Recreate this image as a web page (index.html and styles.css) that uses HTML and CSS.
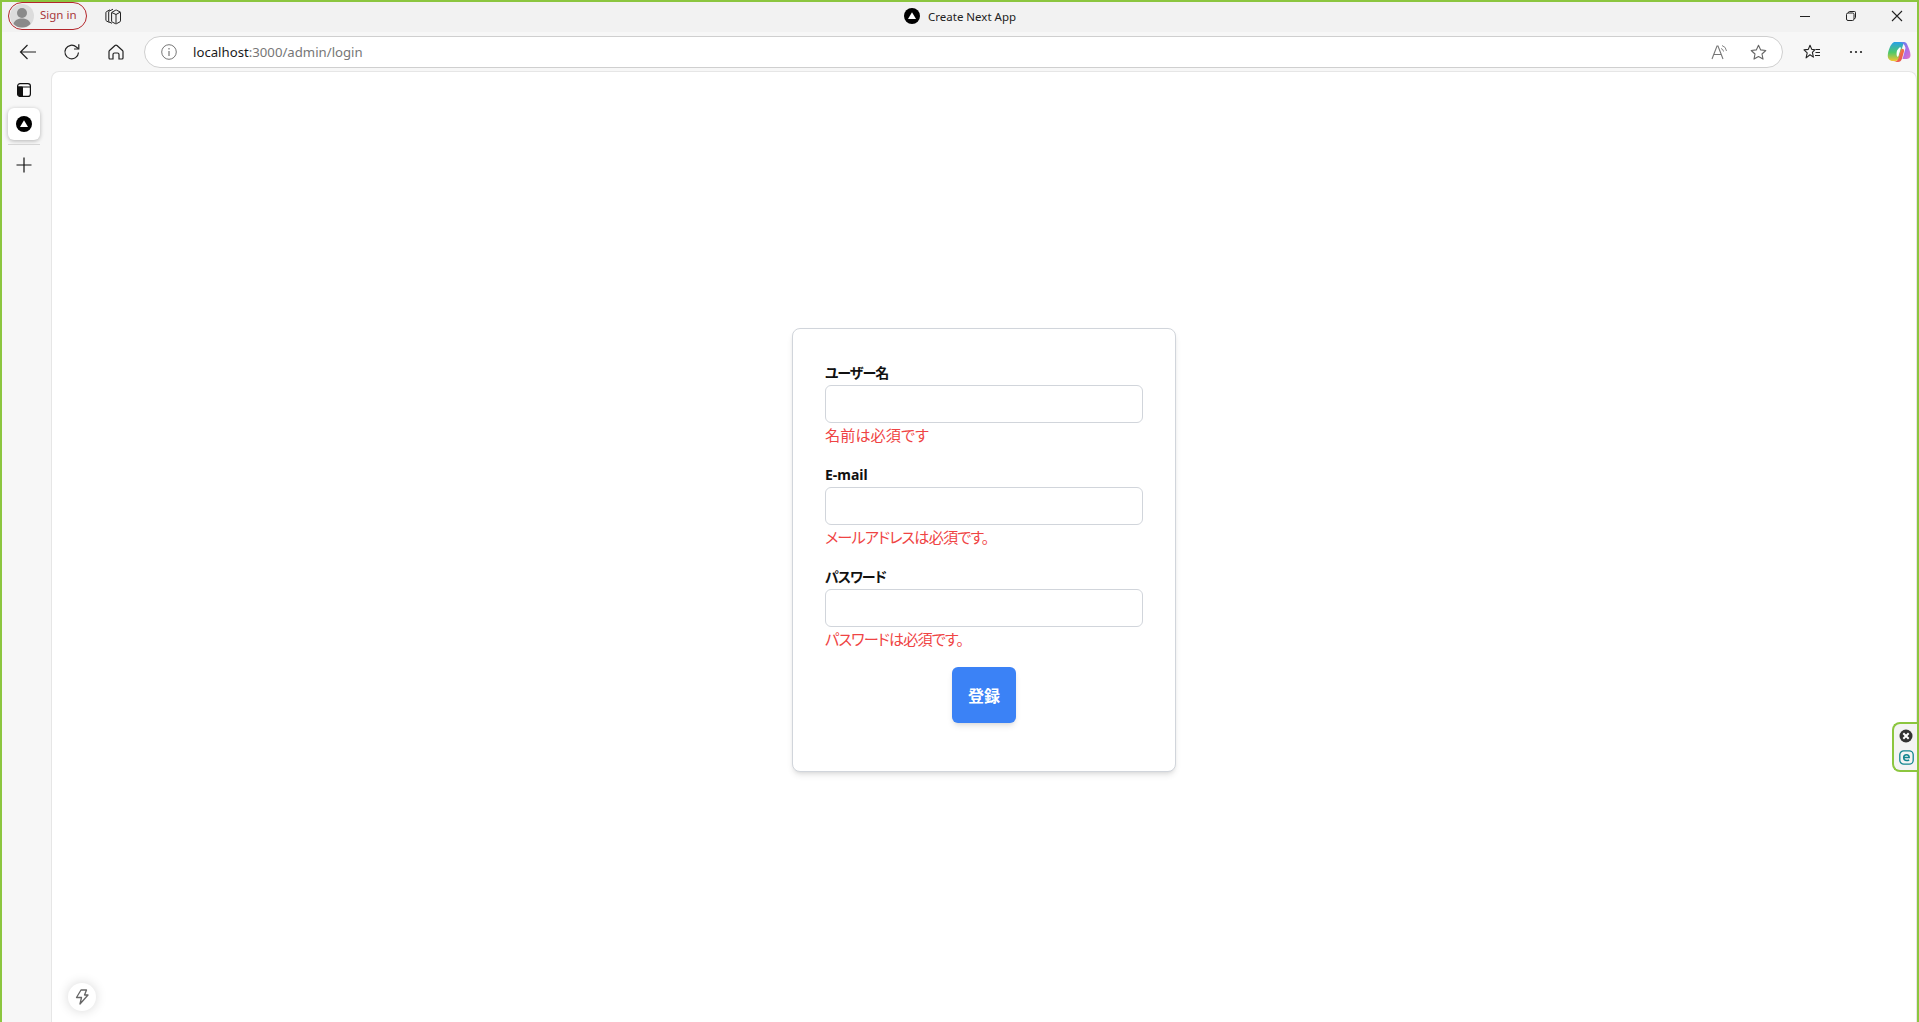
FILE: index.html
```html
<!DOCTYPE html>
<html lang="ja">
<head>
<meta charset="utf-8">
<title>Create Next App</title>
<link rel="stylesheet" href="styles.css">
</head>
<body>
<div class="window">
  <header class="titlebar">
    <div class="title-left">
      <div class="profile">
        <svg class="avatar" width="24" height="24" viewBox="0 0 24 24"><circle cx="12" cy="12" r="12" fill="#dcdcdc"/><circle cx="12" cy="9" r="5" fill="#8a8a8a"/><path d="M3.5 20c1-4 4.500-5.500 8.500-5.500s7.500 1.500 8.500 5.500a12 12 0 0 1-17 0z" fill="#8a8a8a"/></svg>
        <span class="profile-name">Sign in</span>
      </div>
      <svg class="collections" width="18" height="18" viewBox="0 0 18 18" fill="none" stroke="#222" stroke-width="1"><path d="M5.500 15.500 2.500 14a1 1 0 0 1-.6-.9V5.500a1 1 0 0 1 .6-.9L6 2.800"/><path d="M8 16.300 5.300 15a1 1 0 0 1-.6-.9V5a1 1 0 0 1 .6-.9L9 2.200"/><path d="M7.600 6a1 1 0 0 1 .6-.9L11.700 3.200a1 1 0 0 1 .9 0l3.400 1.700a1 1 0 0 1 .5.900v8.100a1 1 0 0 1-.5.900l-3.500 1.900a1 1 0 0 1-1 0l-3.300-1.700a1 1 0 0 1-.6-.9z"/><path d="M7.700 5.500 12 7.500l4.500-2.500M12 7.500V16.500"/></svg>
    </div>
    <div class="title-center">
      <svg width="16" height="16" viewBox="0 0 16 16"><circle cx="8" cy="8" r="8" fill="#000"/><path d="M8 4.300 12 11H4z" fill="#fff"/></svg>
      <span class="title-text">Create Next App</span>
    </div>
    <div class="window-controls">
      <svg width="12" height="12" viewBox="0 0 12 12" stroke="#222" fill="none"><path d="M1 6.500h10"/></svg>
      <svg width="12" height="12" viewBox="0 0 12 12" stroke="#222" fill="none"><rect x="1.500" y="3" width="7.500" height="7.500" rx="1.500"/><path d="M3.500 3V2.500a1 1 0 0 1 1-1h5a1 1 0 0 1 1 1V7.500a1 1 0 0 1-1 1H9"/></svg>
      <svg width="12" height="12" viewBox="0 0 12 12" stroke="#222" fill="none" stroke-width="1.100"><path d="m1 1 10 10M11 1 1 11"/></svg>
    </div>
  </header>

  <nav class="toolbar">
    <div class="nav-buttons">
      <svg width="18" height="18" viewBox="0 0 18 18" fill="none" stroke="#222" stroke-width="1.200"><path d="M1.500 9h15.500M8.500 2 1.500 9l7 7"/></svg>
      <svg width="18" height="18" viewBox="0 0 18 18" fill="none" stroke="#222" stroke-width="1.200"><path d="M15.500 9.500a6.800 6.800 0 1 1-2.200-5.500l2.200 1.800"/><path d="M15.800 1.300V6H11"/></svg>
      <svg width="18" height="18" viewBox="0 0 18 18" fill="none" stroke="#222" stroke-width="1.200"><path d="M2.500 7.500 8 2.500a1.500 1.500 0 0 1 2 0l5.500 5a1.500 1.500 0 0 1 .5 1V15a1 1 0 0 1-1 1h-3V11.500a1.500 1.500 0 0 0-1.500-1.500h-3A1.500 1.500 0 0 0 6 11.500V16H3a1 1 0 0 1-1-1V8.500a1.500 1.500 0 0 1 .5-1z"/></svg>
    </div>
    <div class="address">
      <svg class="info" width="16" height="16" viewBox="0 0 16 16" fill="none" stroke="#777"><circle cx="8" cy="8" r="7.300"/><path d="M8 7v5M8 4v1.400" stroke-width="1.200"/></svg>
      <span class="url"><span class="host">localhost</span>:3000/admin/login</span>
      <div class="address-end">
        <svg width="18" height="16" viewBox="0 0 18 16" fill="none" stroke="#777" stroke-width="1.100"><path d="M1 15 6 2h1l5 13M2.800 10.500h7.400"/><path d="M10 4.500a3.500 3.500 0 0 1 2.500 3M11 1.500a6.500 6.500 0 0 1 4.500 5.500" stroke-width=".9"/></svg>
        <svg width="17" height="17" viewBox="0 0 17 17" fill="none" stroke="#666" stroke-width="1.100"><path d="m8.500 1.200 2.200 4.700 5.100.6-3.800 3.500 1 5.100-4.500-2.500L4 15.100l1-5.100L1.200 6.500l5.100-.6z" stroke-linejoin="round"/></svg>
      </div>
    </div>
    <div class="tool-buttons">
      <svg class="favorites" width="18" height="17" viewBox="0 0 18 17" fill="none" stroke="#222" stroke-width="1.100"><path d="m7 1.200 1.800 4.200 3.200.3-2.600 2.600 1 4.800-3.400-2.300-3.900 3.100 1.100-5L1 5.900l4.300-.5z" stroke-linejoin="round"/><path d="M12.500 5.500H17M12.500 8.500H17M12 11.500h5"/></svg>
      <svg width="14" height="4" viewBox="0 0 14 4" fill="#222"><circle cx="2" cy="2" r="1.100"/><circle cx="7" cy="2" r="1.100"/><circle cx="12" cy="2" r="1.100"/></svg>
      <svg width="24" height="22" viewBox="0 0 24 22">
        <defs>
          <linearGradient id="cpA" x1="0" y1="0" x2="0" y2="1"><stop offset="0" stop-color="#27a0e8"/><stop offset=".55" stop-color="#4fc96a"/><stop offset="1" stop-color="#f2c531"/></linearGradient>
          <linearGradient id="cpB" x1="0" y1="0" x2="1" y2="1"><stop offset="0" stop-color="#3f8df0"/><stop offset=".6" stop-color="#b06ce6"/><stop offset="1" stop-color="#e772c0"/></linearGradient>
          <linearGradient id="cpC" x1="0" y1="0" x2="1" y2="1"><stop offset="0" stop-color="#f7a13a"/><stop offset="1" stop-color="#e83f55"/></linearGradient>
        </defs>
        <path d="M8 1h6c1.200 0 2 .6 2.400 1.800L12 17c-.4 1.500-1.500 2.500-3 3H6C2.500 20 .5 17.500 .8 14 1.100 10 3 5 5 2.800 5.800 1.600 6.800 1 8 1z" fill="url(#cpA)"/>
        <path d="M11.500 1H17c1.500 0 2.700 1 3.200 2.500C21.800 7 23.500 11 23.500 14c0 3-2 4-4.500 4h-3.500c1-3 2.500-9 3-11-.5-3-3-6-7-6z" fill="url(#cpB)"/>
        <path d="M10 9.500 12 7c.8-1 2-.8 1.800.5L11.500 15c-.2.800-.8 1-1.300.6-.8-.8-.8-4 -.2-6.100z" fill="#fff"/>
        <path d="M14 8c2.500-.5 3.500.5 3 2.500L15 17.500C14.500 20 12.500 21 11 21H6c3 0 4.800-1.500 5.500-4z" fill="url(#cpC)"/>
      </svg>
    </div>
  </nav>

  <div class="workspace">
    <aside class="sidebar">
      <svg class="side-toggle" width="14" height="14" viewBox="0 0 14 14"><rect x=".6" y=".6" width="12.800" height="12.800" rx="2.500" fill="#fff" stroke="#111" stroke-width="1.200"/><path d="M1 4h12M5.500 4v9.200H3a2 2 0 0 1-2-2V4z" fill="#111" stroke="#111"/></svg>
      <div class="side-tab">
        <svg width="16" height="16" viewBox="0 0 16 16"><circle cx="8" cy="8" r="8" fill="#000"/><path d="M8 4.300 12 11H4z" fill="#fff"/></svg>
      </div>
      <div class="side-rule"></div>
      <svg class="side-add" width="16" height="16" viewBox="0 0 16 16" stroke="#111" stroke-width="1.200"><path d="M8 .5v15M.5 8h15"/></svg>
    </aside>

    <main class="content">
      <form class="card">
        <div class="field">
          <label class="label label-kana">ユーザー名</label>
          <input class="input" type="text">
          <p class="error">名前は必須です</p>
        </div>
        <div class="field">
          <label class="label">E-mail</label>
          <input class="input" type="email">
          <p class="error error-kana">メールアドレスは必須です。</p>
        </div>
        <div class="field">
          <label class="label label-kana">パスワード</label>
          <input class="input" type="password">
          <p class="error error-kana">パスワードは必須です。</p>
        </div>
        <div class="actions">
          <button class="submit" type="button">登録</button>
        </div>
      </form>
      <div class="dev-badge">
        <svg width="14" height="16" viewBox="0 0 14 16" fill="none" stroke="#666" stroke-width="1.300" stroke-linejoin="round"><path d="M6 1h5.500L9.500 6H13L5 15l1.500-6.500H1.500z"/></svg>
      </div>
    </main>
  </div>

  <div class="eset">
    <svg width="14" height="14" viewBox="0 0 14 14"><circle cx="7" cy="7" r="6.500" fill="#333"/><path d="m4.300 4.300 5.400 5.400M9.700 4.300 4.300 9.700" stroke="#fff" stroke-width="2"/></svg>
    <svg width="15" height="15" viewBox="0 0 15 15" fill="none"><rect x=".8" y=".8" width="13.400" height="13.400" rx="4" stroke="#12858f" stroke-width="1.300"/><path d="M4.700 7.600h5.500c0-1.800-1-2.900-2.700-2.900S4.700 5.900 4.700 7.600s1.100 3 2.900 3c1 0 1.900-.3 2.500-.8" stroke="#12858f" stroke-width="1.500"/></svg>
  </div>
</div>
</body>
</html>
```

FILE: styles.css
```css
* { box-sizing: border-box; }

html, body {
  margin: 0;
  height: 100%;
  overflow: hidden;
  background: #f7f7f7;
}

body {
  font-family: "Noto Sans", "Noto Sans CJK JP", sans-serif;
  color: #111;
}

.window {
  position: relative;
  display: flex;
  flex-direction: column;
  height: 1022px;
  border-top: 2px solid #8cc63f;
  border-left: 2px solid #8cc63f;
  border-right: 2px solid #8cc63f;
  overflow: hidden;
}

/* Title bar */
.titlebar {
  position: relative;
  display: flex;
  align-items: center;
  justify-content: space-between;
  flex: none;
  height: 30px;
  background: #f2f2f2;
  padding: 0 14px 2px 6px;
}

.title-left {
  display: flex;
  align-items: center;
  gap: 17px;
}

.profile {
  display: flex;
  align-items: center;
  gap: 6px;
  width: 79px;
  height: 28px;
  padding: 0 0 0 1px;
  border: 1px solid #b3262b;
  border-radius: 14px;
}

.avatar { flex: none; }

.profile-name {
  font-size: 11.500px;
  line-height: 24px;
  padding-bottom: 2px;
  color: #a8383c;
}

.title-center {
  position: absolute;
  left: 902px;
  top: 6px;
  display: flex;
  align-items: center;
  gap: 8px;
}

.title-text {
  font-size: 11.500px;
  color: #222;
}

.window-controls {
  display: flex;
  align-items: center;
  gap: 34px;
}

/* Toolbar */
.toolbar {
  display: flex;
  align-items: center;
  flex: none;
  height: 39px;
  padding: 1px 6px 0 17px;
  background: #f7f7f7;
}

.nav-buttons {
  display: flex;
  align-items: center;
  gap: 26px;
  margin-right: 19px;
}

.address {
  display: flex;
  align-items: center;
  flex: none;
  width: 1639px;
  height: 32px;
  padding: 0 15px 0 16px;
  background: #fff;
  border: 1px solid #cfcfcf;
  border-radius: 16px;
}

.info { margin-right: 16px; }

.url {
  font-size: 13.200px;
  color: #767676;
}

.host { color: #1a1a1a; }

.address-end {
  display: flex;
  align-items: center;
  gap: 21px;
  margin-left: auto;
}

.tool-buttons {
  display: flex;
  align-items: center;
  gap: 24px;
  margin-left: 20px;
}

.favorites { margin-right: 4px; }

/* Workspace */
.workspace {
  display: flex;
  flex: 1;
  min-height: 0;
}

.sidebar {
  display: flex;
  flex-direction: column;
  align-items: center;
  flex: none;
  width: 49px;
  padding: 12px 7px 0 1px;
}

.side-toggle { margin-bottom: 11px; }

.side-tab {
  display: flex;
  align-items: center;
  justify-content: center;
  width: 32px;
  height: 32px;
  background: #fff;
  border-radius: 6px;
  box-shadow: 0 1px 4px rgba(0, 0, 0, .28);
}

.side-rule {
  width: 32px;
  height: 1px;
  margin: 4px 0 12px;
  background: #d6d6d6;
}

.content {
  position: relative;
  flex: 1;
  display: flex;
  justify-content: center;
  align-items: flex-start;
  padding: 256px 0 0;
  background: #fff;
  border-top: 1px solid #e6e6e6;
  border-left: 1px solid #e6e6e6;
  border-right: 1px solid #e6e6e6;
  border-radius: 8px 8px 0 0;
}

/* Card */
.card {
  width: 384px;
  height: 444px;
  padding: 32px;
  background: #fff;
  border: 1px solid #d1d5db;
  border-radius: 8px;
  box-shadow: 0 4px 6px -1px rgba(0, 0, 0, .1), 0 2px 4px -2px rgba(0, 0, 0, .1);
  font-feature-settings: "palt";
}

.field { margin-bottom: 16px; }

.label {
  display: block;
  font-size: 14px;
  line-height: 24px;
  font-weight: 700;
  color: #111;
}

.label-kana { letter-spacing: -1px; }

.input {
  display: block;
  width: 100%;
  height: 38px;
  padding: 0 12px;
  background: #fff;
  border: 1px solid #d1d5db;
  border-radius: 6px;
  outline: none;
}

.error {
  margin: 0;
  font-size: 15.200px;
  line-height: 24px;
  color: #ef4444;
}

.error-kana { letter-spacing: -.9px; }

.actions {
  display: flex;
  justify-content: center;
}

.submit {
  width: 64px;
  height: 56px;
  padding: 0;
  background: #3b82f6;
  border: 0;
  border-radius: 6px;
  color: #fff;
  font-family: inherit;
  font-size: 16px;
  font-weight: 700;
  box-shadow: 0 4px 6px -1px rgba(0, 0, 0, .1), 0 2px 4px -2px rgba(0, 0, 0, .1);
}

/* Floating items */
.dev-badge {
  position: absolute;
  left: 16px;
  bottom: 11px;
  display: flex;
  align-items: center;
  justify-content: center;
  width: 28px;
  height: 28px;
  background: #fff;
  border-radius: 50%;
  box-shadow: 0 0 12px rgba(0, 0, 0, .16);
}

.eset {
  position: absolute;
  right: 0;
  top: 720px;
  display: flex;
  flex-direction: column;
  align-items: center;
  justify-content: center;
  gap: 7px;
  width: 25px;
  height: 50px;
  padding-left: 1px;
  background: #f4f4f4;
  border: 2px solid #8cc63f;
  border-right: 0;
  border-radius: 8px 0 0 8px;
}
```
